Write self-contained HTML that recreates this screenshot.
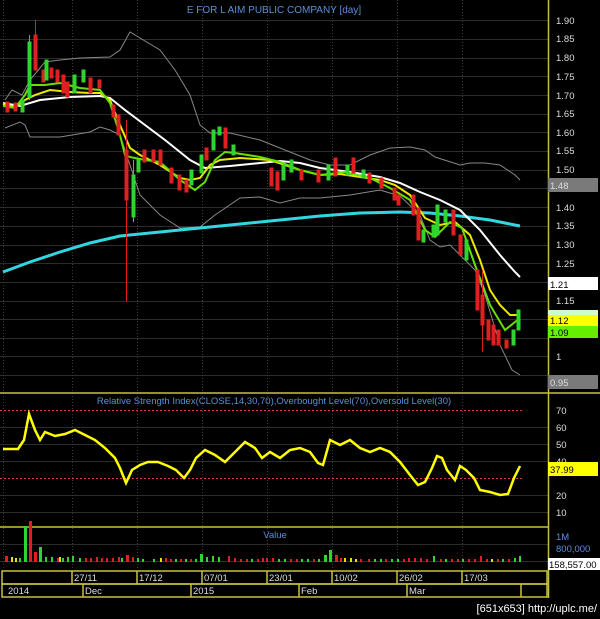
<!DOCTYPE html><html><head><style>body{margin:0;background:#000;width:600px;height:619px;overflow:hidden}svg{display:block}text{font-family:"Liberation Sans",sans-serif}</style></head><body>
<svg width="600" height="619" viewBox="0 0 600 619">
<rect width="600" height="619" fill="#000"/>
<g stroke="#2c2c2c" stroke-width="1">
<line x1="0" x2="548" y1="20.5" y2="20.5"/><line x1="0" x2="548" y1="39.5" y2="39.5"/><line x1="0" x2="548" y1="58.5" y2="58.5"/><line x1="0" x2="548" y1="76.5" y2="76.5"/><line x1="0" x2="548" y1="95.5" y2="95.5"/><line x1="0" x2="548" y1="114.5" y2="114.5"/><line x1="0" x2="548" y1="132.5" y2="132.5"/><line x1="0" x2="548" y1="151.5" y2="151.5"/><line x1="0" x2="548" y1="170.5" y2="170.5"/><line x1="0" x2="548" y1="188.5" y2="188.5"/><line x1="0" x2="548" y1="207.5" y2="207.5"/><line x1="0" x2="548" y1="226.5" y2="226.5"/><line x1="0" x2="548" y1="245.5" y2="245.5"/><line x1="0" x2="548" y1="263.5" y2="263.5"/><line x1="0" x2="548" y1="282.5" y2="282.5"/><line x1="0" x2="548" y1="301.5" y2="301.5"/><line x1="0" x2="548" y1="319.5" y2="319.5"/><line x1="0" x2="548" y1="338.5" y2="338.5"/><line x1="0" x2="548" y1="356.5" y2="356.5"/><line x1="0" x2="548" y1="375.5" y2="375.5"/>
<line x1="0" x2="548" y1="427.5" y2="427.5"/><line x1="0" x2="548" y1="444.5" y2="444.5"/><line x1="0" x2="548" y1="461.5" y2="461.5"/><line x1="0" x2="548" y1="495.5" y2="495.5"/><line x1="0" x2="548" y1="512.5" y2="512.5"/>
<line x1="0" x2="548" y1="544.5" y2="544.5"/><line x1="0" x2="548" y1="561.5" y2="561.5"/>
</g>
<g stroke="#3a3a3a" stroke-dasharray="1,2">
<line x1="3.5" x2="3.5" y1="0" y2="570"/><line x1="72.5" x2="72.5" y1="0" y2="570"/><line x1="137.5" x2="137.5" y1="0" y2="570"/><line x1="202.5" x2="202.5" y1="0" y2="570"/><line x1="267.5" x2="267.5" y1="0" y2="570"/><line x1="332.5" x2="332.5" y1="0" y2="570"/><line x1="397.5" x2="397.5" y1="0" y2="570"/><line x1="462.5" x2="462.5" y1="0" y2="570"/>
</g>
<text x="274" y="13" fill="#5b8fd6" font-size="10" text-anchor="middle">E FOR L AIM PUBLIC COMPANY [day]</text>
<polyline fill="none" stroke="#888" stroke-width="1" points="5,100 12,90 22,95 30,80 45,62 60,60 80,58 110,57 120,50 130,32 140,38 160,50 175,70 190,95 200,125 210,133 230,133 260,140 290,152 310,160 330,165 350,165 370,155 390,148 410,147 425,150 435,157 460,165 470,163 485,163 500,165 515,175 520,180"/>
<polyline fill="none" stroke="#888" stroke-width="1" points="5,128 20,122 25,125 30,137 60,137 90,132 100,127 110,130 120,135 130,165 140,195 160,215 180,228 200,227 215,215 240,198 260,197 280,203 300,198 320,198 350,195 380,190 400,196 420,215 430,240 440,247 450,245 460,255 475,270 485,295 500,345 512,370 520,375"/>
<polyline fill="none" stroke="#33d6e0" stroke-width="3" points="3,272 30,262 60,252 90,243 120,236 160,232 200,228 240,224 280,220 320,216 360,213 400,212 430,213 460,216 490,220 520,226"/>
<polyline fill="none" stroke="#fff" stroke-width="2" points="3,103 20,106 40,100 70,97 100,96 110,98 125,110 145,125 165,140 190,160 205,168 230,166 260,163 280,161 300,163 320,168 350,172 380,177 400,183 420,192 440,200 460,210 480,230 500,255 515,272 520,277"/>
<polyline fill="none" stroke="#e8e800" stroke-width="2" points="3,104 15,107 25,100 35,95 50,90 70,92 90,93 100,93 110,100 120,125 130,148 140,155 160,165 180,178 190,180 200,178 210,165 220,160 240,158 270,160 300,170 320,175 340,174 360,177 380,180 395,185 410,195 425,218 440,225 455,222 470,235 480,260 490,290 500,305 510,315 520,315"/>
<polyline fill="none" stroke="#66e000" stroke-width="2" points="3,106 15,108 25,95 30,85 45,85 60,83 80,88 100,90 110,103 120,135 125,155 130,157 145,160 160,162 180,180 195,190 205,182 215,160 225,152 235,153 260,157 280,162 300,170 320,175 345,172 370,178 390,188 410,200 425,230 435,237 450,222 462,228 475,265 490,305 505,330 515,322 520,318"/>
<g stroke-width="1">
<g fill="#e02020" stroke="#e02020">
<rect x="6" y="102" width="3" height="10"/><rect x="14" y="103" width="3" height="8"/><line x1="35.5" y1="20" x2="35.5" y2="70"/><rect x="34" y="35" width="3" height="35"/><rect x="42" y="70" width="3" height="12"/><rect x="50" y="68" width="3" height="10"/><rect x="56" y="70" width="3" height="12"/><rect x="62" y="75" width="3" height="18"/><rect x="66" y="82" width="3" height="15"/><rect x="89" y="78" width="3" height="15"/><rect x="98" y="80" width="3" height="8"/><line x1="126.5" y1="120" x2="126.5" y2="302"/><rect x="125" y="150" width="3" height="50"/><rect x="117" y="115" width="3" height="20"/><rect x="112" y="105" width="3" height="12"/><rect x="143" y="150" width="3" height="12"/><rect x="152" y="150" width="3" height="12"/><rect x="159" y="150" width="3" height="15"/><rect x="170" y="168" width="3" height="15"/><rect x="178" y="175" width="3" height="15"/><rect x="185" y="180" width="3" height="12"/><rect x="205" y="148" width="3" height="12"/><rect x="224" y="128" width="3" height="20"/><rect x="270" y="168" width="3" height="18"/><rect x="276" y="172" width="3" height="18"/><rect x="300" y="170" width="3" height="10"/><rect x="317" y="170" width="3" height="12"/><rect x="334" y="158" width="3" height="18"/><rect x="352" y="158" width="3" height="15"/><rect x="368" y="173" width="3" height="10"/><rect x="380" y="178" width="3" height="10"/><rect x="393" y="188" width="3" height="12"/><rect x="397" y="195" width="3" height="10"/><rect x="412" y="195" width="3" height="20"/><rect x="417" y="208" width="3" height="32"/><rect x="452" y="210" width="3" height="25"/><rect x="459" y="235" width="3" height="20"/><rect x="476" y="270" width="3" height="40"/><line x1="482.5" y1="270" x2="482.5" y2="352"/><rect x="481" y="295" width="3" height="30"/><rect x="487" y="320" width="3" height="20"/><rect x="492" y="325" width="3" height="20"/><rect x="497" y="330" width="3" height="15"/><rect x="505" y="340" width="3" height="8"/>
</g>
<g fill="#2fd42f" stroke="#2fd42f">
<line x1="29.5" y1="35" x2="29.5" y2="100"/><rect x="28" y="42" width="3" height="55"/><rect x="21" y="100" width="3" height="12"/><rect x="45" y="60" width="3" height="20"/><rect x="73" y="75" width="3" height="18"/><rect x="82" y="70" width="3" height="12"/><line x1="133.5" y1="160" x2="133.5" y2="222"/><rect x="132" y="175" width="3" height="42"/><rect x="137" y="160" width="3" height="12"/><rect x="190" y="170" width="3" height="15"/><rect x="200" y="155" width="3" height="18"/><rect x="212" y="130" width="3" height="20"/><rect x="218" y="127" width="3" height="8"/><rect x="232" y="145" width="3" height="10"/><rect x="282" y="165" width="3" height="15"/><rect x="290" y="160" width="3" height="12"/><rect x="327" y="165" width="3" height="15"/><rect x="346" y="165" width="3" height="10"/><rect x="362" y="170" width="3" height="8"/><rect x="422" y="230" width="3" height="12"/><rect x="432" y="225" width="3" height="12"/><rect x="436" y="205" width="3" height="30"/><rect x="444" y="210" width="3" height="12"/><rect x="465" y="240" width="3" height="20"/><rect x="512" y="330" width="3" height="15"/><rect x="517" y="310" width="3" height="20"/>
</g>
</g>
<line x1="548.5" x2="548.5" y1="0" y2="598" stroke="#c8c040" stroke-width="1.5"/>
<g fill="#ddd" font-size="9.5">
<text x="556" y="24">1.90</text><text x="556" y="42">1.85</text><text x="556" y="61">1.80</text><text x="556" y="80">1.75</text><text x="556" y="99">1.70</text><text x="556" y="117">1.65</text><text x="556" y="136">1.60</text><text x="556" y="154">1.55</text><text x="556" y="173">1.50</text><text x="556" y="211">1.40</text><text x="556" y="229">1.35</text><text x="556" y="248">1.30</text><text x="556" y="267">1.25</text><text x="556" y="304">1.15</text><text x="556" y="360">1</text>
</g>
<rect x="548" y="178" width="50" height="14" fill="#7a7a7a"/><text x="550" y="189" fill="#ddd" font-size="9.5">1.48</text>
<rect x="548" y="277" width="50" height="13" fill="#fff"/><text x="550" y="288" fill="#000" font-size="9.5">1.21</text>
<rect x="548" y="310" width="50" height="5" fill="#ccffcc"/>
<rect x="548" y="315" width="50" height="11" fill="#ffff00"/><text x="550" y="324" fill="#000" font-size="9.5">1.12</text>
<rect x="548" y="326" width="50" height="12" fill="#66ee00"/><text x="550" y="336" fill="#000" font-size="9.5">1.09</text>
<rect x="548" y="375" width="50" height="14" fill="#7a7a7a"/><text x="550" y="386" fill="#ddd" font-size="9.5">0.95</text>
<line x1="0" x2="600" y1="393" y2="393" stroke="#c8c040" stroke-width="1.5"/>
<text x="274" y="404" fill="#5b8fd6" font-size="9.5" text-anchor="middle">Relative Strength Index(CLOSE,14,30,70),Overbought Level(70),Oversold Level(30)</text>
<line x1="0" x2="522" y1="410.5" y2="410.5" stroke="#d04040" stroke-dasharray="2,2"/>
<line x1="0" x2="522" y1="478.5" y2="478.5" stroke="#d04040" stroke-dasharray="2,2"/>
<polyline fill="none" stroke="#ffff00" stroke-width="2.5" points="3,449 18,449 24,440 29,414 35,430 40,440 45,432 55,436 65,434 75,430 85,435 95,440 105,448 115,458 120,468 126,483 132,470 140,465 148,462 158,462 168,466 176,470 184,478 190,470 196,458 205,450 215,455 225,462 235,452 245,442 255,448 262,458 270,452 280,458 290,450 300,448 310,452 318,463 323,465 330,440 340,445 350,440 360,448 370,452 380,448 390,452 400,462 410,475 418,485 425,482 432,468 437,456 442,458 447,470 455,480 460,466 466,470 474,478 480,490 490,492 500,495 508,494 514,478 520,466"/>
<g fill="#ddd" font-size="9.5"><text x="556" y="414">70</text><text x="556" y="431">60</text><text x="556" y="448">50</text><text x="556" y="465">40</text><text x="556" y="499">20</text><text x="556" y="516">10</text></g>
<rect x="548" y="462" width="50" height="14" fill="#ffff00"/><text x="550" y="473" fill="#000" font-size="9.5">37.99</text>
<line x1="0" x2="548" y1="527" y2="527" stroke="#c8c040" stroke-width="1.5"/>
<text x="275" y="538" fill="#5b8fd6" font-size="9.5" text-anchor="middle">Value</text>
<text x="556" y="540" fill="#5b8fd6" font-size="9.5">1M</text>
<text x="556" y="552" fill="#5b8fd6" font-size="9.5">800,000</text>
<rect x="548" y="558" width="52" height="12" fill="#fff"/><text x="549" y="568" fill="#000" font-size="9.5">158,557.00</text>
<g fill="#e02020">
<rect x="5" y="556" width="3" height="6"/><rect x="29" y="521" width="3" height="41"/><rect x="34" y="552" width="3" height="10"/><rect x="57" y="558" width="2" height="4"/><rect x="85" y="558" width="2" height="4"/><rect x="90" y="558" width="2" height="4"/><rect x="96" y="557" width="2" height="5"/><rect x="101" y="558" width="2" height="4"/><rect x="106" y="558" width="2" height="4"/><rect x="112" y="558" width="2" height="4"/><rect x="118" y="557" width="2" height="5"/><rect x="126" y="555" width="3" height="7"/><rect x="132" y="557" width="2" height="5"/><rect x="165" y="558" width="2" height="4"/><rect x="170" y="559" width="2" height="3"/><rect x="180" y="559" width="2" height="3"/><rect x="190" y="559" width="2" height="3"/><rect x="228" y="556" width="2" height="6"/><rect x="234" y="558" width="2" height="4"/><rect x="240" y="559" width="2" height="3"/><rect x="246" y="559" width="2" height="3"/><rect x="257" y="559" width="2" height="3"/><rect x="262" y="558" width="2" height="4"/><rect x="266" y="558" width="2" height="4"/><rect x="272" y="558" width="2" height="4"/><rect x="290" y="559" width="2" height="3"/><rect x="296" y="559" width="2" height="3"/><rect x="313" y="559" width="2" height="3"/><rect x="335" y="555" width="3" height="7"/><rect x="340" y="558" width="2" height="4"/><rect x="360" y="559" width="2" height="3"/><rect x="368" y="559" width="2" height="3"/><rect x="385" y="559" width="2" height="3"/><rect x="403" y="559" width="2" height="3"/><rect x="408" y="558" width="2" height="4"/><rect x="414" y="558" width="2" height="4"/><rect x="420" y="558" width="2" height="4"/><rect x="426" y="559" width="2" height="3"/><rect x="440" y="559" width="2" height="3"/><rect x="451" y="559" width="2" height="3"/><rect x="457" y="559" width="2" height="3"/><rect x="468" y="559" width="2" height="3"/><rect x="474" y="559" width="2" height="3"/><rect x="480" y="556" width="2" height="6"/><rect x="486" y="559" width="2" height="3"/><rect x="497" y="559" width="2" height="3"/><rect x="508" y="559" width="2" height="3"/>
</g>
<g fill="#2fd42f">
<rect x="19" y="558" width="2" height="4"/><rect x="24" y="526" width="3" height="36"/><rect x="39" y="547" width="3" height="15"/><rect x="45" y="557" width="2" height="5"/><rect x="51" y="557" width="2" height="5"/><rect x="62" y="558" width="2" height="4"/><rect x="67" y="557" width="2" height="5"/><rect x="72" y="556" width="2" height="6"/><rect x="79" y="558" width="2" height="4"/><rect x="121" y="558" width="2" height="4"/><rect x="137" y="558" width="2" height="4"/><rect x="142" y="559" width="2" height="3"/><rect x="153" y="559" width="2" height="3"/><rect x="175" y="559" width="2" height="3"/><rect x="185" y="559" width="2" height="3"/><rect x="195" y="559" width="2" height="3"/><rect x="200" y="554" width="3" height="8"/><rect x="206" y="557" width="2" height="5"/><rect x="212" y="556" width="2" height="6"/><rect x="218" y="557" width="2" height="5"/><rect x="251" y="559" width="2" height="3"/><rect x="278" y="559" width="2" height="3"/><rect x="284" y="559" width="2" height="3"/><rect x="301" y="559" width="2" height="3"/><rect x="307" y="559" width="2" height="3"/><rect x="318" y="559" width="2" height="3"/><rect x="324" y="555" width="3" height="7"/><rect x="329" y="550" width="3" height="12"/><rect x="374" y="559" width="2" height="3"/><rect x="380" y="559" width="2" height="3"/><rect x="391" y="559" width="2" height="3"/><rect x="397" y="559" width="2" height="3"/><rect x="433" y="556" width="2" height="6"/><rect x="445" y="559" width="2" height="3"/><rect x="462" y="559" width="2" height="3"/><rect x="502" y="559" width="2" height="3"/><rect x="514" y="558" width="2" height="4"/><rect x="519" y="556" width="2" height="6"/>
</g>
<g fill="#e8e000"><rect x="11" y="557" width="2" height="5"/><rect x="15" y="558" width="2" height="4"/><rect x="59" y="557" width="2" height="5"/><rect x="160" y="558" width="2" height="4"/><rect x="344" y="558" width="2" height="4"/><rect x="350" y="558" width="2" height="4"/><rect x="355" y="559" width="2" height="3"/><rect x="491" y="559" width="2" height="3"/></g>
<g fill="none" stroke="#c8c040" stroke-width="1.5">
<rect x="2" y="571" width="545" height="13"/><rect x="2" y="584" width="545" height="13"/>
<line x1="72" x2="72" y1="571" y2="584"/><line x1="137" x2="137" y1="571" y2="584"/><line x1="202" x2="202" y1="571" y2="584"/><line x1="267" x2="267" y1="571" y2="584"/><line x1="332" x2="332" y1="571" y2="584"/><line x1="397" x2="397" y1="571" y2="584"/><line x1="462" x2="462" y1="571" y2="584"/>
<line x1="83" x2="83" y1="584" y2="597"/><line x1="191" x2="191" y1="584" y2="597"/><line x1="299" x2="299" y1="584" y2="597"/><line x1="407" x2="407" y1="584" y2="597"/><line x1="521" x2="521" y1="584" y2="597"/>
</g>
<g fill="#ddd" font-size="9.5">
<text x="74" y="581">27/11</text><text x="139" y="581">17/12</text><text x="204" y="581">07/01</text><text x="269" y="581">23/01</text><text x="334" y="581">10/02</text><text x="399" y="581">26/02</text><text x="464" y="581">17/03</text>
<text x="8" y="594">2014</text><text x="85" y="594">Dec</text><text x="193" y="594">2015</text><text x="301" y="594">Feb</text><text x="409" y="594">Mar</text>
</g>
<text x="597" y="612" fill="#fff" font-size="11" text-anchor="end" font-family="Liberation Mono, monospace">[651x653] http://uplc.me/</text>
</svg>
</body></html>
